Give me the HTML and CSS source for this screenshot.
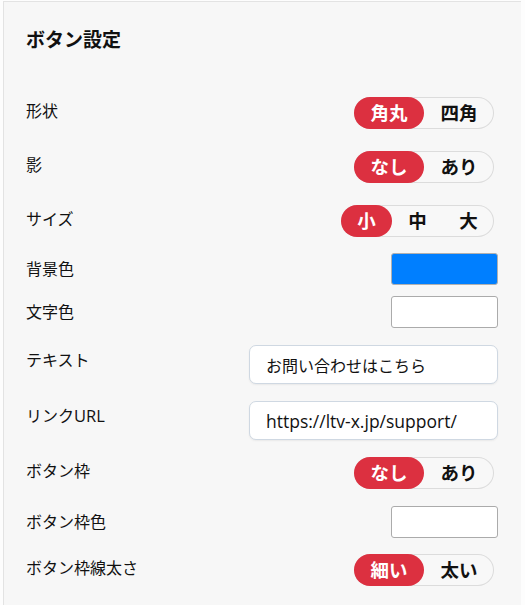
FILE: index.html
```html
<!DOCTYPE html>
<html lang="ja">
<head>
<meta charset="utf-8">
<link rel="stylesheet" href="styles.css">
</head>
<body>
<div class="page">
  <section class="panel">
    <h2 class="title">ボタン設定</h2>
    <div class="rows">
      <div class="row row-first">
        <span class="label label-up">形状</span>
        <div class="toggle"><span class="seg active">角丸</span><span class="seg">四角</span></div>
      </div>
      <div class="row row-wide">
        <span class="label label-up">影</span>
        <div class="toggle"><span class="seg active">なし</span><span class="seg">あり</span></div>
      </div>
      <div class="row row-wide">
        <span class="label label-up">サイズ</span>
        <div class="toggle"><span class="seg seg-one active">小</span><span class="seg seg-one">中</span><span class="seg seg-one">大</span></div>
      </div>
      <div class="row row-mid">
        <span class="label">背景色</span>
        <div class="swatch swatch-blue"></div>
      </div>
      <div class="row row-tight">
        <span class="label">文字色</span>
        <div class="swatch"></div>
      </div>
      <div class="row">
        <span class="label label-up2">テキスト</span>
        <div class="field">お問い合わせはこちら</div>
      </div>
      <div class="row">
        <span class="label label-up2">リンク<span class="latin">URL</span></span>
        <div class="field field-url">https://ltv-x.jp/support/</div>
      </div>
      <div class="row">
        <span class="label label-up">ボタン枠</span>
        <div class="toggle"><span class="seg active">なし</span><span class="seg">あり</span></div>
      </div>
      <div class="row">
        <span class="label">ボタン枠色</span>
        <div class="swatch"></div>
      </div>
      <div class="row row-mid">
        <span class="label label-up">ボタン枠線太さ</span>
        <div class="toggle"><span class="seg active">細い</span><span class="seg">太い</span></div>
      </div>
    </div>
  </section>
</div>
</body>
</html>
```

FILE: styles.css
```css
* { box-sizing: border-box; }
html, body { margin: 0; padding: 0; background: #fdfdfd; }
body {
  font-family: "Open Sans", "Noto Sans CJK JP", sans-serif;
  color: #111;
  width: 525px;
  height: 605px;
  overflow: hidden;
}
.page {
  padding: 1px 0 0 3px;
}
.panel {
  width: 518px;
  height: 604px;
  overflow: hidden;
  background: #f7f7f7;
  border-top: 1px solid #e3e3e3;
  border-left: 1px solid #e3e3e3;
  padding: 0 23px 0 22px;
}
.title {
  margin: 0;
  padding-top: 25px;
  font-size: 19px;
  font-weight: 700;
  line-height: 27px;
}
.rows {
  display: flex;
  flex-direction: column;
}
.row {
  display: flex;
  align-items: center;
  justify-content: space-between;
  margin-top: 17px;
}
.row-first { margin-top: 43px; }
.row-wide { margin-top: 22px; }
.row-mid { margin-top: 16px; }
.row-tight { margin-top: 11px; }
.label {
  font-size: 16px;
  line-height: 22px;
}
.latin { font-size: 16.5px; }
.label-up { padding-bottom: 5px; }
.label-up2 { padding-bottom: 9px; }
.toggle {
  display: flex;
  height: 32px;
  border-radius: 16px;
  box-shadow: inset 0 0 0 1px #dcdcdc;
  background: #f8f8f8;
  margin-right: 4px;
}
.seg {
  display: flex;
  align-items: center;
  justify-content: center;
  width: 70px;
  font-size: 18.5px;
  font-weight: 700;
  color: #111;
  border-radius: 16px;
  line-height: 1;
}
.seg-one { width: 51px; }
.seg.active {
  background: #dc3040;
  color: #fff;
}
.swatch {
  width: 107px;
  height: 32px;
  background: #fff;
  border: 1px solid #ababab;
  border-radius: 3px;
}
.swatch-blue {
  background: #007fff;
  border-color: #b0b0b0;
}
.field {
  width: 249px;
  height: 39px;
  background: #fff;
  border: 1px solid #cfd8e2;
  border-radius: 7px;
  padding: 0 16px;
  display: flex;
  align-items: center;
  font-size: 16px;
  color: #111;
  box-shadow: 0 1px 2px rgba(0,0,0,0.06);
}
.field-url { font-size: 17.5px; }
```
